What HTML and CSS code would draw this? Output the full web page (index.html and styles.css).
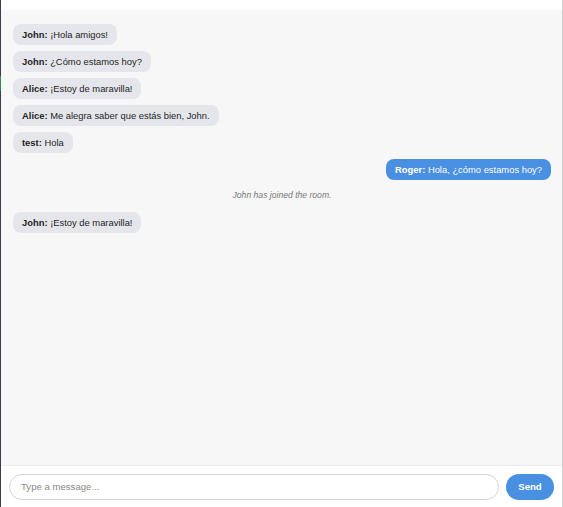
FILE: index.html
```html
<!DOCTYPE html>
<html lang="es">
<head>
<meta charset="utf-8">
<title>Chat</title>
<link rel="stylesheet" href="styles.css">
</head>
<body>
<div class="app">
  <div class="edge"></div>
  <div class="chat">
    <div class="topbar"></div>
    <div class="messages">
      <div class="msg other"><b>John:</b> ¡Hola amigos!</div>
      <div class="msg other"><b>John:</b> ¿Cómo estamos hoy?</div>
      <div class="msg other"><b>Alice:</b> ¡Estoy de maravilla!</div>
      <div class="msg other"><b>Alice:</b> Me alegra saber que estás bien, John.</div>
      <div class="msg other"><b>test:</b> Hola</div>
      <div class="msg mine"><b>Roger:</b> Hola, ¿cómo estamos hoy?</div>
      <div class="system">John has joined the room.</div>
      <div class="msg other"><b>John:</b> ¡Estoy de maravilla!</div>
    </div>
    <div class="composer">
      <input class="field" type="text" placeholder="Type a message...">
      <button class="send">Send</button>
    </div>
  </div>
</div>
</body>
</html>
```
FILE: styles.css
```css
html, body {
  margin: 0;
  padding: 0;
  height: 100%;
  background: #ffffff;
  font-family: "Liberation Sans", Arial, sans-serif;
}
.app {
  display: flex;
  height: 507px;
}
.edge {
  width: 1px;
  flex: none;
  background: linear-gradient(to bottom, #3d3d47 0, #3d3d47 76px, #2e8b57 76px, #2e8b57 91px, #3d3d47 91px, #3d3d47 100%);
}
.chat {
  flex: 1;
  display: flex;
  flex-direction: column;
  border-right: 1px solid #cfcfcf;
}
.topbar {
  height: 10px;
  flex: none;
  background: #ffffff;
}
.messages {
  flex: 1;
  background: #f7f7f7;
  padding: 14px 11px 0 12px;
  display: flex;
  flex-direction: column;
  align-items: flex-start;
  gap: 6px;
}
.msg {
  font-size: 9.4px;
  line-height: 12px;
  padding: 4.5px 9px;
  border-radius: 8px;
  color: #1e1e1e;
}
.msg b { font-weight: bold; }
.other {
  background: #e5e6eb;
}
.mine {
  align-self: flex-end;
  background: #4a90e2;
  color: #ffffff;
}
.system {
  align-self: center;
  font-size: 8.6px;
  font-style: italic;
  color: #777777;
  padding: 4px 0 6px;
}
.composer {
  flex: none;
  height: 41px;
  border-top: 1px solid #ececec;
  display: flex;
  align-items: center;
  padding: 0 8px;
  gap: 7px;
}
.field {
  flex: 1;
  height: 26px;
  box-sizing: border-box;
  border: 1px solid #d4d4d4;
  border-radius: 13px;
  padding: 0 11px;
  font-family: "Liberation Sans", Arial, sans-serif;
  font-size: 9.6px;
  color: #333;
  outline: none;
  background: #fff;
}
.field::placeholder { color: #8a8a8a; }
.send {
  flex: none;
  width: 48px;
  height: 26px;
  border: none;
  border-radius: 13px;
  background: #4a90e2;
  color: #fff;
  font-family: "Liberation Sans", Arial, sans-serif;
  font-weight: bold;
  font-size: 9.6px;
}
```
